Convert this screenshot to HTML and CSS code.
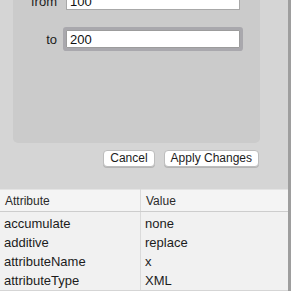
FILE: index.html
```html
<!DOCTYPE html>
<html lang="en">
<head>
  <meta charset="UTF-8">
  <title>Animate Attributes</title>
  <link rel="stylesheet" href="styles.css">
</head>
<body>

<div class="window">
  <div class="sheet">
    <div class="panel">
      <div class="field">
        <label class="field-label">from</label>
        <input class="field-input" type="text" value="100">
      </div>
      <div class="field">
        <label class="field-label">to</label>
        <input class="field-input focused" type="text" value="200">
      </div>
    </div>

    <div class="actions">
      <button class="btn">Cancel</button>
      <button class="btn">Apply Changes</button>
    </div>

    <table class="attrs">
      <thead>
        <tr><th>Attribute</th><th>Value</th></tr>
      </thead>
      <tbody>
        <tr><td>accumulate</td><td>none</td></tr>
        <tr><td>additive</td><td>replace</td></tr>
        <tr><td>attributeName</td><td>x</td></tr>
        <tr><td>attributeType</td><td>XML</td></tr>
      </tbody>
    </table>
  </div>
</div>

</body>
</html>
```

FILE: styles.css
```css
body {
  margin: 0;
  padding: 0;
  font-family: 'Liberation Sans', Arial, sans-serif;
  color: #1c1c1c;
  background: #d5d5d5;
  overflow: hidden;
}
.window {
  display: flex;
  width: 291px;
  height: 291px;
  overflow: hidden;
}
.sheet {
  width: 288px;
  border-right: 3px solid #9e9e9e;
  background: #d5d5d5;
}
.panel {
  margin: -24px 0 0 13px;
  width: 247px;
  height: 167px;
  box-sizing: border-box;
  padding-top: 16px;
  background: #cbcbcb;
  border-radius: 5px;
  display: flex;
  flex-direction: column;
  gap: 20px;
}
.field {
  display: flex;
  align-items: center;
  height: 18px;
}
.field-label {
  width: 44px;
  text-align: right;
  font-size: 13px;
  margin-right: 9px;
}
.field-input {
  width: 174px;
  height: 18px;
  box-sizing: border-box;
  border: 1px solid #a8a8a8;
  background: white;
  font-family: 'Liberation Sans', Arial, sans-serif;
  font-size: 13px;
  padding: 0 3px;
  margin: 0;
  outline: none;
  color: #111;
}
.field-input.focused {
  box-shadow: 0 0 0 3px #a9a8ad;
  border-color: #9c9c9c;
  border-radius: 1px;
}
.actions {
  display: flex;
  justify-content: flex-end;
  gap: 9px;
  width: 259px;
  margin-top: 7px;
}
.btn {
  height: 17px;
  padding: 0 6px;
  font-family: 'Liberation Sans', Arial, sans-serif;
  font-size: 12px;
  line-height: 15px;
  color: #1c1c1c;
  background: white;
  border: 1px solid #bdbdbd;
  border-radius: 4px;
  box-shadow: 0 1px 0 #b5b5b5;
}
.attrs {
  margin-top: 22px;
  width: 288px;
  border-collapse: collapse;
  background: #f1f1f1;
}
.attrs th {
  height: 21px;
  padding: 0 5px;
  text-align: left;
  font-size: 12px;
  font-weight: normal;
  color: #2a2a2a;
  background: #f4f4f4;
  border-top: 1px solid #e4e4e4;
  border-bottom: 1px solid #cdcdcd;
}
.attrs th:first-child,
.attrs td:first-child {
  width: 130px;
  border-right: 1px solid #dadada;
}
.attrs td {
  height: 19px;
  padding: 0 4px;
  font-size: 13px;
  line-height: 19px;
}
.attrs tbody tr:first-child td {
  padding-top: 2px;
}
```
